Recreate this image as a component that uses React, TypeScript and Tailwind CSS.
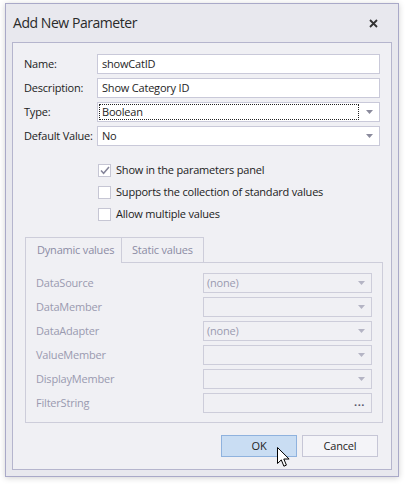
import React from "react";

const font = { fontFamily: '"Open Sans", "Noto Sans", sans-serif' };

function Arrow({ color = "#8a8a9c" }: { color?: string }) {
  return (
    <svg width="7" height="4" viewBox="0 0 7 4" className="shrink-0">
      <path d="M0 0h7L3.5 4z" fill={color} />
    </svg>
  );
}

function TextBox({ value }: { value: string }) {
  return (
    <div className="flex-1 h-[20px] bg-white border border-[#c9c9d9] flex items-center px-[4px] text-[#1e1e1e]">
      {value}
    </div>
  );
}

function Combo({ value, focused }: { value: string; focused?: boolean }) {
  return (
    <div className="flex-1 h-[20px] bg-white border border-[#c9c9d9] flex items-center pl-[1px] pr-[6px]">
      <div
        className={
          "flex-1 h-[16px] flex items-center px-[2px] text-[#1e1e1e] " +
          (focused ? "border border-dotted border-[#222]" : "border border-transparent")
        }
      >
        {value}
      </div>
      <div className="w-[14px] flex justify-end">
        <Arrow />
      </div>
    </div>
  );
}

function FieldRow({ label, children }: { label: string; children: React.ReactNode }) {
  return (
    <div className="flex items-center h-[20px]">
      <div className="w-[73px] shrink-0 text-[#222]">{label}</div>
      {children}
    </div>
  );
}

function Check({ label, checked }: { label: string; checked?: boolean }) {
  return (
    <div className="flex items-center h-[22px] gap-[5px]">
      <div className="w-[13px] h-[13px] border border-[#c6c6d4] bg-white flex items-center justify-center">
        {checked && (
          <svg width="10" height="9" viewBox="0 0 10 9">
            <path d="M1 4.5l2.6 2.8L9 1" stroke="#85859a" strokeWidth="1.5" fill="none" />
          </svg>
        )}
      </div>
      <span className="text-[#222]">{label}</span>
    </div>
  );
}

function DisabledRow({ label, value, dots }: { label: string; value?: string; dots?: boolean }) {
  return (
    <div className="flex items-center h-[20px]">
      <div className="w-[167px] shrink-0 text-[#9a9ab0]">{label}</div>
      <div className="flex-1 h-[20px] border border-[#cdcdda] bg-[#f0f0f4] flex items-center pl-[3px] pr-[6px] text-[#9a9ab0]">
        <span className="flex-1">{value}</span>
        {dots ? (
          <span className="text-[#55556a] font-bold tracking-[0.5px] leading-none -mt-[4px]">...</span>
        ) : (
          <Arrow color="#b4b4c4" />
        )}
      </div>
    </div>
  );
}

export default function App() {
  return (
    <div className="relative w-[405px] h-[484px] bg-white text-[11px] tracking-[-0.2px]" style={font}>
      <div className="absolute left-[5px] top-[3px] w-[394px] h-[474px] border border-[#a9a9c8] bg-[#e8e8ee] shadow-[0_1px_6px_rgba(0,0,0,0.18)] flex flex-col">
        {/* title bar */}
        <div className="h-[38px] flex items-center justify-between pl-[7px] pr-[20px]">
          <span className="text-[14px] text-[#2a2a2a] tracking-[-0.45px] -mt-[1px]">Add New Parameter</span>
          <svg width="9" height="9" viewBox="0 0 9 9">
            <path d="M1 1l7 7M8 1L1 8" stroke="#333" strokeWidth="1.8" />
          </svg>
        </div>

        {/* body */}
        <div className="mx-[6px] h-[428px] border border-[#b5b5cd] bg-[#f0f0f4] pt-[11px]">
          <div className="pl-[11px] pr-[11px] flex flex-col gap-[4px]">
            <FieldRow label="Name:">
              <TextBox value="showCatID" />
            </FieldRow>
            <FieldRow label="Description:">
              <TextBox value="Show Category ID" />
            </FieldRow>
            <FieldRow label="Type:">
              <Combo value="Boolean" focused />
            </FieldRow>
            <FieldRow label="Default Value:">
              <Combo value="No" />
            </FieldRow>
          </div>

          <div className="mt-[13px] pl-[85px] flex flex-col">
            <Check label="Show in the parameters panel" checked />
            <Check label="Supports the collection of standard values" />
            <Check label="Allow multiple values" />
          </div>

          {/* tabs */}
          <div className="mt-[12px] ml-[12px] mr-[8px]">
            <div className="flex h-[25px]">
              <div className="w-[97px] border border-b-0 border-[#cdcdda] bg-[#f0f0f4] flex items-center pl-[11px] text-[#8c8ca4] relative z-10 h-[26px]">
                Dynamic values
              </div>
              <div className="w-[82px] border border-l-0 border-b-0 border-[#cdcdda] flex items-center pl-[10px] text-[#8c8ca4]">
                Static values
              </div>
            </div>
            <div className="h-[161px] border border-[#cdcdda] pt-[10px] pl-[10px] pr-[10px] flex flex-col gap-[4px]">
              <DisabledRow label="DataSource" value="(none)" />
              <DisabledRow label="DataMember" />
              <DisabledRow label="DataAdapter" value="(none)" />
              <DisabledRow label="ValueMember" />
              <DisabledRow label="DisplayMember" />
              <DisabledRow label="FilterString" dots />
            </div>
          </div>

          {/* buttons */}
          <div className="mt-[12px] pr-[13px] flex justify-end gap-[5px]">
            <div className="w-[76px] h-[22px] border border-[#8fb2de] bg-[#c9ddf3] flex items-center justify-center text-[#1e1e1e]">
              OK
            </div>
            <div className="w-[76px] h-[22px] border border-[#c6c6d6] bg-[#f4f4f8] flex items-center justify-center text-[#1e1e1e]">
              Cancel
            </div>
          </div>
        </div>
      </div>

      {/* mouse cursor */}
      <svg className="absolute left-[277px] top-[447px]" width="13" height="21" viewBox="0 0 13 21">
        <path
          d="M0.5 0.5V16.5L4.3 12.9L6.9 19.2L9.4 18.1L6.8 12H12.1Z"
          fill="#fff"
          stroke="#000"
          strokeWidth="1"
          strokeLinejoin="miter"
        />
      </svg>
    </div>
  );
}
